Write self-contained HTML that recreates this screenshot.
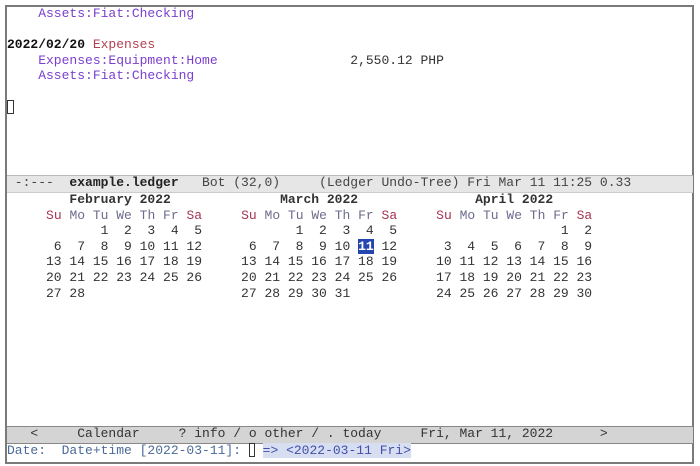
<!DOCTYPE html>
<html><head><meta charset="utf-8"><style>
html,body{margin:0;padding:0;background:#fff;width:700px;height:466px;overflow:hidden}
#f{position:absolute;left:5px;top:5px;width:685px;height:455px;border:2px solid #7a7a7a;}
pre{margin:0;font-family:"Liberation Mono",monospace;font-size:13px;line-height:15.6px;position:absolute;left:7px;color:#333;white-space:pre}
.a{color:#7b3fcf}.e{color:#b3404e}.b{font-weight:bold;color:#111}
.w{color:#a33452}.d{color:#6c6c8c}
.ml{position:absolute;left:7px;width:686px;height:16px}
.hl{background:#2546b0;color:#fff;font-weight:bold}
.m{color:#4a6a9a}
</style></head><body>
<div id="f"></div>
<pre style="top:6px"><span class="a">    Assets:Fiat:Checking</span>

<span class="b">2022/02/20</span> <span class="e">Expenses</span>
<span class="a">    Expenses:Equipment:Home</span>                 2,550.12 PHP
<span class="a">    Assets:Fiat:Checking</span>
</pre>
<div style="position:absolute;left:7px;top:100px;width:7px;height:14px;border:1px solid #333;box-sizing:border-box"></div>
<div class="ml" style="top:175px;background:#e6e6e6;border-top:1px solid #bbb;border-bottom:1px solid #ccc"></div>
<pre style="top:175px;color:#444"> -:---  <b style="color:#222">example.ledger</b>   Bot (32,0)     (Ledger Undo-Tree) Fri Mar 11 11:25 0.33</pre>
<pre style="top:192px">        <b>February 2022</b>              <b>March 2022</b>               <b>April 2022</b>
     <span class="w">Su</span> <span class="d">Mo Tu We Th Fr</span> <span class="w">Sa</span>     <span class="w">Su</span> <span class="d">Mo Tu We Th Fr</span> <span class="w">Sa</span>     <span class="w">Su</span> <span class="d">Mo Tu We Th Fr</span> <span class="w">Sa</span>
            1  2  3  4  5            1  2  3  4  5                     1  2
      6  7  8  9 10 11 12      6  7  8  9 10 <span class="hl">11</span> 12      3  4  5  6  7  8  9
     13 14 15 16 17 18 19     13 14 15 16 17 18 19     10 11 12 13 14 15 16
     20 21 22 23 24 25 26     20 21 22 23 24 25 26     17 18 19 20 21 22 23
     27 28                    27 28 29 30 31           24 25 26 27 28 29 30
</pre>
<div class="ml" style="top:426px;background:#d4d4d4;border-top:1px solid #888;border-bottom:1px solid #888"></div>
<pre style="top:426px;color:#333">   &lt;     Calendar     ? info / o other / . today     Fri, Mar 11, 2022      &gt;</pre>
<pre style="top:443px"><span class="m">Date:  Date+time [2022-03-11]:</span> <span style="display:inline-block;width:6px;height:14px;border:1px solid #333;vertical-align:-3px;box-sizing:border-box"></span> <span style="background:#d8def2;color:#4050a8">=&gt; &lt;2022-03-11 Fri&gt;</span></pre>
</body></html>
